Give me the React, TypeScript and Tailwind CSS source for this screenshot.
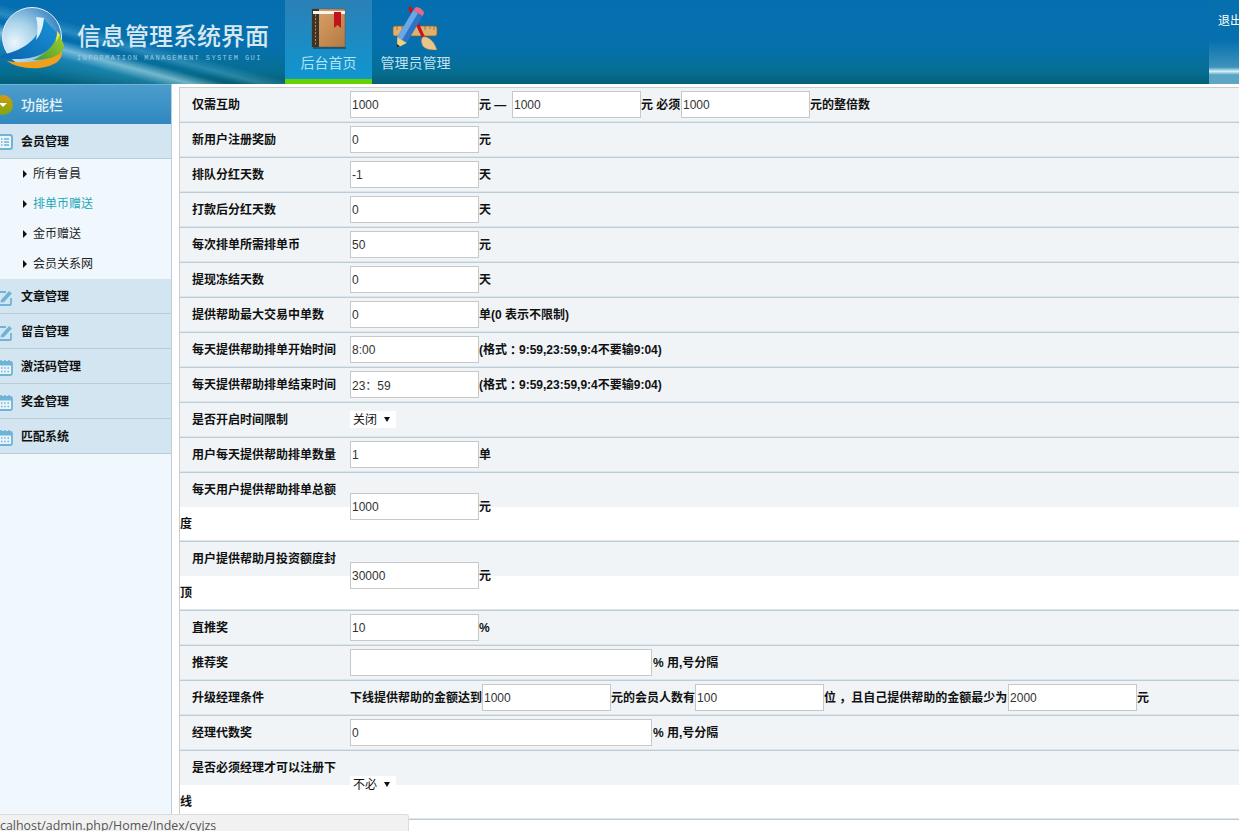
import { ReactNode } from "react";

const FONT = "font-['Liberation_Sans','Noto_Sans_CJK_SC',sans-serif]";

function Logo() {
  return (
    <svg width="70" height="84" viewBox="0 0 70 84" className="-mr-[2px] shrink-0">
      <defs>
        <radialGradient id="globe" cx="0.2" cy="0.6" r="0.8">
          <stop offset="0" stopColor="#eaf6fc" />
          <stop offset="0.45" stopColor="#a9d3ea" />
          <stop offset="1" stopColor="#3d87c4" />
        </radialGradient>
        <linearGradient id="swoosh" x1="0" x2="1" y1="1" y2="0">
          <stop offset="0" stopColor="#0c63ae" />
          <stop offset="1" stopColor="#1894d8" />
        </linearGradient>
        <linearGradient id="leaf" x1="0" x2="1" y1="1" y2="0">
          <stop offset="0" stopColor="#3f9a2e" />
          <stop offset="1" stopColor="#a9d12c" />
        </linearGradient>
      </defs>
      <circle cx="32" cy="37" r="29.500" fill="url(#globe)" stroke="#e4f2fa" strokeWidth="1" />
      <path d="M7 61 C25 64 50 62 62 51 C63 60 55 66 40 68 C25 69 14 66 7 61 Z" fill="#f0a01c" />
      <path d="M33 60 C45 55 55 45 58 32 L64 45 C64 55 50 60 33 60 Z" fill="url(#leaf)" />
      <path d="M57 31 L60 35 C58 38 57 40 56 42 Z" fill="#e7ec4a" />
      <path d="M1 55 C18 52 40 42 43 18 L57 33 C55 50 38 63 1 58 Z" fill="url(#swoosh)" />
      <path d="M36 17 L44 18 C43 28 41 34 36 40 C38 32 38 24 36 17 Z" fill="#dff1fa" />
    </svg>
  );
}

function BookIcon() {
  return (
    <svg width="36" height="42" viewBox="0 0 36 42">
      <defs>
        <linearGradient id="cover" x1="0" x2="1" y1="0" y2="1">
          <stop offset="0" stopColor="#dfa46a" />
          <stop offset="1" stopColor="#b47a43" />
        </linearGradient>
      </defs>
      <rect x="1" y="1" width="33" height="38" rx="1" fill="url(#cover)" stroke="#7a4d26" strokeWidth="0.5" />
      <rect x="1" y="1" width="7" height="38" fill="#3f3328" />
      <path d="M4.500 3 V37" stroke="#b98a4f" strokeWidth="1" strokeDasharray="2 1.500" />
      <rect x="2" y="3" width="32" height="3" fill="#f4f4f4" />
      <path d="M23 4 H30 V20 L26.500 17 L23 20 Z" fill="#c4121c" />
      <rect x="2" y="39" width="33" height="2" fill="#0a3f5f" opacity="0.6" />
    </svg>
  );
}

function ToolsIcon() {
  return (
    <svg width="48" height="46" viewBox="0 0 48 46">
      <rect x="1" y="22" width="44" height="10" rx="2" fill="#e0b070" stroke="#8a5c2a" strokeWidth="0.7" />
      <path d="M5 22 v4 M10 22 v3 M15 22 v4 M33 22 v4 M38 22 v3 M42 22 v4" stroke="#8a5c2a" strokeWidth="0.7" />
      <path d="M16 4 L19 2 L33 33 L30 34 Z" fill="#c3141f" />
      <path d="M31 33 C36 32 42 37 45 46 C38 46 31 45 30 40 C29 37 29 35 31 33 Z" fill="#e8c48e" stroke="#a98049" strokeWidth="0.5" />
      <path d="M21.300 6.200 L30.700 11.900 L14.700 38.900 L5.300 33.100 Z" fill="#2c74c4" />
      <path d="M21.300 6.200 L26 9 L10 36 L5.300 33.100 Z" fill="#69a8e4" />
      <path d="M21.300 6.200 L24 3 C28 3 32 7 32 9 L30.700 11.900 Z" fill="#ea6a86" />
      <path d="M5.300 33.100 L14.700 38.900 L5 44 Z" fill="#f0d27c" />
      <path d="M5 40 L8 42.300 L5 44 Z" fill="#1c2a3a" />
    </svg>
  );
}

function ListIcon() {
  return (
    <svg width="16" height="16" viewBox="0 0 16 16" className="shrink-0">
      <rect x="1" y="1" width="14" height="14" rx="2" fill="#eaf4fa" stroke="#6fb3d6" strokeWidth="2" />
      <path d="M4 5 h1.500 M7 5 h5 M4 8 h1.500 M7 8 h5 M4 11 h1.500 M7 11 h5" stroke="#6fb3d6" strokeWidth="1.400" />
    </svg>
  );
}

function EditIcon() {
  return (
    <svg width="16" height="17" viewBox="0 0 16 17" className="shrink-0">
      <path d="M9 3 H2 a1 1 0 0 0 -1 1 V15 a1 1 0 0 0 1 1 H13 a1 1 0 0 0 1 -1 V9" fill="none" stroke="#6fb3d6" strokeWidth="1.800" />
      <path d="M4 11 L12 2 L15 4.500 L7 13 L3.500 13.500 Z" fill="#6fb3d6" />
    </svg>
  );
}

function CalendarIcon() {
  return (
    <svg width="16" height="17" viewBox="0 0 16 17" className="shrink-0">
      <rect x="1" y="3" width="14" height="13" rx="1.500" fill="#eaf4fa" stroke="#6fb3d6" strokeWidth="1.800" />
      <rect x="1" y="3" width="14" height="3.500" fill="#6fb3d6" />
      <path d="M4 1 v3 M8 1 v3 M12 1 v3" stroke="#6fb3d6" strokeWidth="1.500" />
      <path d="M4 9 h1.500 M7.200 9 h1.500 M10.500 9 h1.500 M4 12.500 h1.500 M7.200 12.500 h1.500 M10.500 12.500 h1.500" stroke="#6fb3d6" strokeWidth="1.500" />
    </svg>
  );
}

function Header() {
  return (
    <header className="flex h-[84px] overflow-hidden bg-[linear-gradient(#056eb0_0%,#0670ae_55%,#066e92_85%,#055f78_100%)]">
      <div className="flex w-[285px] shrink-0 bg-[linear-gradient(195deg,transparent_50%,rgba(150,220,245,0.25)_56%,transparent_60%,transparent_62%,rgba(190,235,250,0.6)_68%,rgba(60,170,215,0.35)_74%,transparent_88%)]">
        <Logo />
        <div className="ml-[9px] flex flex-col pt-[21px]">
          <div className="text-[24px] font-medium leading-[32px] text-[#d8e8f1]">信息管理系统界面</div>
          <div className="mt-[1px] whitespace-nowrap font-['Liberation_Mono',monospace] text-[7px] leading-[8px] tracking-[1.400px] text-[#9ccae2]">
            INFORMATION MANAGEMENT SYSTEM GUI
          </div>
        </div>
      </div>
      <div className="flex h-[84px] w-[87px] shrink-0 flex-col items-center border-b-[5px] border-[#66d100] bg-[linear-gradient(#2b80b6,#0f96d0)] pt-[8px]">
        <BookIcon />
        <div className="mt-[3px] text-[14px] leading-[20px] text-[#b5e2f5]">后台首页</div>
      </div>
      <div className="flex w-[86px] shrink-0 flex-col items-center pl-[1px] pt-[4px]">
        <ToolsIcon />
        <div className="mt-[3px] whitespace-nowrap text-[14px] leading-[20px] text-[#bfe3f2]">管理员管理</div>
      </div>
      <div className="flex flex-1 justify-end">
        <div className="w-[30px] overflow-hidden whitespace-nowrap bg-[linear-gradient(#0670ae_48%,#3f93bb_80%,#d8f0fa_85%,#58a5c4_89%,#5fa6c2)] pl-[9px] pt-[13px] text-[12px] leading-[16px] text-white">
          退出
        </div>
      </div>
    </header>
  );
}

type SideItem = { label: string; icon: ReactNode; children?: { label: string; active?: boolean }[] };

const sideItems: SideItem[] = [
  {
    label: "会员管理",
    icon: <ListIcon />,
    children: [{ label: "所有會員" }, { label: "排单币赠送", active: true }, { label: "金币赠送" }, { label: "会员关系网" }],
  },
  { label: "文章管理", icon: <EditIcon /> },
  { label: "留言管理", icon: <EditIcon /> },
  { label: "激活码管理", icon: <CalendarIcon /> },
  { label: "奖金管理", icon: <CalendarIcon /> },
  { label: "匹配系统", icon: <CalendarIcon /> },
];

function Sidebar() {
  return (
    <aside className="w-[172px] shrink-0 border-r border-[#bccfdb] bg-[#f0f8fe]">
      <div className="flex h-[40px] items-center gap-[8px] border-t border-[#6fb4de] bg-[linear-gradient(#4c9dcc,#2f88bf)] pt-[1px] text-[14px] font-medium text-[#e8f3f9]">
        <span className="-ml-[7px] flex h-[20px] w-[20px] items-center justify-center rounded-full bg-[linear-gradient(#d49a12,#7aa80e)]">
          <span className="h-0 w-0 border-x-[4px] border-t-[4px] border-x-transparent border-t-white" />
        </span>
        功能栏
      </div>
      {sideItems.map((item) => (
        <div key={item.label}>
          <div className="flex h-[35px] items-center gap-[8px] border-b border-[#b9cdd9] bg-[#d3e5f0] pt-[2px] text-[12px] font-bold text-[#111]">
            <span className="-ml-[3px] flex">{item.icon}</span>
            {item.label}
          </div>
          {item.children && (
            <ul>
              {item.children.map((child) => (
                <li
                  key={child.label}
                  className={`flex h-[30px] items-center gap-[6px] pl-[23px] text-[12px] ${child.active ? "text-[#1fa7b8]" : "text-[#222]"}`}
                >
                  <span className="h-0 w-0 border-y-[4px] border-l-[4px] border-y-transparent border-l-[#111]" />
                  {child.label}
                </li>
              ))}
            </ul>
          )}
        </div>
      ))}
    </aside>
  );
}

function Input({ value, wide }: { value: string; wide?: boolean }) {
  return (
    <input
      readOnly
      value={value}
      className={`h-[27px] shrink-0 border border-[#c8c8c8] bg-white px-[1px] text-[12px] font-normal text-[#333] outline-none ${wide ? "w-[302px]" : "w-[129px]"}`}
    />
  );
}

function Select({ value }: { value: string }) {
  return (
    <div className="flex h-[17px] w-[46px] items-center justify-between bg-white pl-[3px] pr-[6px] text-[12px] font-normal text-[#111]">
      {value}
      <span className="h-0 w-0 border-x-[3.500px] border-t-[5px] border-x-transparent border-t-[#111]" />
    </div>
  );
}

type Row = { label: string; tall?: boolean; content: ReactNode };

const format = (
  <>
    (格式<span className="font-['Noto_Sans_CJK_TC',sans-serif]">：</span>9:59,23:59,9:4不要输9:04)
  </>
);

const rows: Row[] = [
  {
    label: "仅需互助",
    content: (
      <>
        <Input value="1000" />
        <span className="w-[33px] whitespace-pre">元 — </span>
        <Input value="1000" />
        <span className="w-[40px] whitespace-pre">元 必须</span>
        <Input value="1000" />
        <span>元的整倍数</span>
      </>
    ),
  },
  { label: "新用户注册奖励", content: <><Input value="0" />元</> },
  { label: "排队分红天数", content: <><Input value="-1" />天</> },
  { label: "打款后分红天数", content: <><Input value="0" />天</> },
  { label: "每次排单所需排单币", content: <><Input value="50" />元</> },
  { label: "提现冻结天数", content: <><Input value="0" />天</> },
  { label: "提供帮助最大交易中单数", content: <><Input value="0" />单(0 表示不限制)</> },
  { label: "每天提供帮助排单开始时间", content: <><Input value="8:00" />{format}</> },
  { label: "每天提供帮助排单结束时间", content: <><Input value="23：59" />{format}</> },
  { label: "是否开启时间限制", content: <Select value="关闭" /> },
  { label: "用户每天提供帮助排单数量", content: <><Input value="1" />单</> },
  { label: "每天用户提供帮助排单总额度", tall: true, content: <><Input value="1000" />元</> },
  { label: "用户提供帮助月投资额度封顶", tall: true, content: <><Input value="30000" />元</> },
  { label: "直推奖", content: <><Input value="10" />%</> },
  { label: "推荐奖", content: <><Input value="" wide /><span className="whitespace-pre pl-[1px]">% 用,号分隔</span></> },
  {
    label: "升级经理条件",
    content: (
      <>
        下线提供帮助的金额达到
        <Input value="1000" />
        元的会员人数有
        <Input value="100" />
        <span className="w-[184px] whitespace-pre">位 ，且自己提供帮助的金额最少为</span>
        <Input value="2000" />元
      </>
    ),
  },
  { label: "经理代数奖", content: <><Input value="0" wide /><span className="whitespace-pre pl-[1px]">% 用,号分隔</span></> },
  { label: "是否必须经理才可以注册下线", tall: true, content: <Select value="不必" /> },
];

function FormRow({ row }: { row: Row }) {
  return (
    <div
      className={`flex items-center pb-[2px] shadow-[inset_0_-1px_0_#bccdd8,inset_0_-2px_0_#dde6eb] ${row.tall ? "h-[69px] bg-[linear-gradient(#f0f4f7_34px,#fff_34px)]" : "h-[35px] bg-[#f0f4f7]"}`}
    >
      <div className="w-[170px] shrink-0 self-start pr-[10px] indent-[12px] leading-[34px]">{row.label}</div>
      <div className="flex items-center whitespace-nowrap">{row.content}</div>
    </div>
  );
}

export default function App() {
  return (
    <div className={`relative h-[831px] w-[1239px] overflow-hidden bg-white ${FONT}`}>
      <Header />
      <div className="flex h-[747px]">
        <Sidebar />
        <main className="min-w-0 flex-1 pl-[7px] pt-[3px]">
          <div className="w-[1100px] border-l border-t border-[#ccc] text-[12px] font-bold text-[#111]">
            {rows.map((row) => (
              <FormRow key={row.label} row={row} />
            ))}
          </div>
        </main>
      </div>
      <div className="absolute bottom-0 left-0 h-[17px] w-[409px] overflow-hidden rounded-tr-[3px] border-r border-t border-[#dcdcdc] bg-[#f1f1f1] pt-[2px] font-['Open_Sans',sans-serif] text-[12.400px] leading-[17px] text-[#555]">
        calhost/admin.php/Home/Index/cyjzs
      </div>
    </div>
  );
}
